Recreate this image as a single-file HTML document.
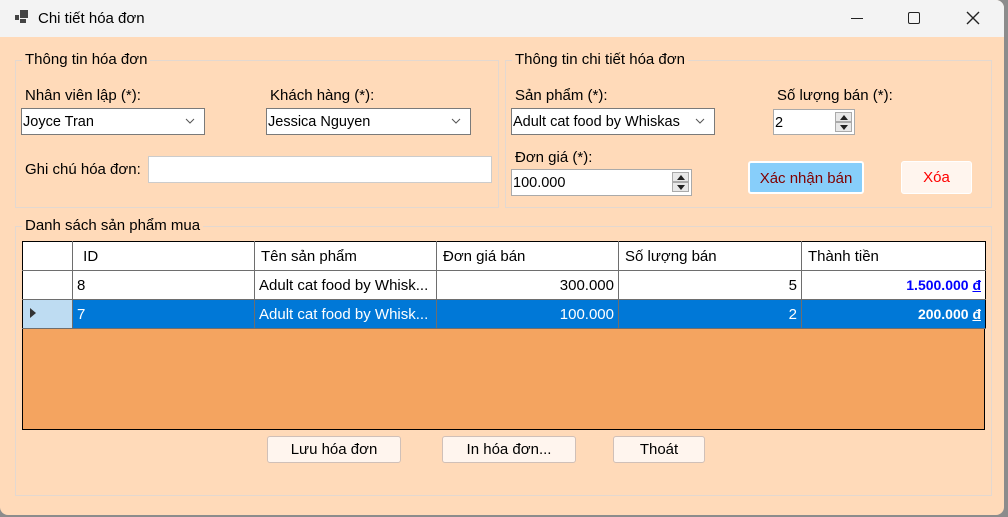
<!DOCTYPE html>
<html><head><meta charset="utf-8"><style>
*{box-sizing:border-box;margin:0;padding:0}
body{width:1008px;height:517px;background:#8c8c8c;overflow:hidden;font-family:"Liberation Sans",sans-serif;font-size:15px;color:#000;position:relative}
.win{position:absolute;left:0;top:0;width:1004px;height:515px;background:#FFDAB9;border-radius:0 8px 8px 8px;overflow:hidden}
.title{position:absolute;left:0;top:0;width:1004px;height:37px;background:#f3f3f3}
.a{position:absolute;white-space:nowrap}
.gb{position:absolute;border:1px solid #e3d8d0}
.gt{position:absolute;background:#FFDAB9;padding:0 3px;font-size:15px}
.box{position:absolute;background:#fff;border:1px solid #7a7a7a;padding:1px 0 0 1px;line-height:24px;font-size:14.5px}
.chev{position:absolute;right:8px;top:6px;width:12px;height:12px}
.spin{position:absolute;right:2px;top:2px;width:17px;height:20px}
.spin div{height:10px;background:#e8e8e8;border:1px solid #aaa;position:relative}
.btn{position:absolute;border:1px solid #d0c0b8;border-radius:3px;background:#FFF5EE;text-align:center;font-size:15px}
table{border-collapse:collapse;position:absolute;left:22px;top:241px;table-layout:fixed}
td{border:1px solid #6e6e6e;height:29px;padding:0 6px;font-size:15px;white-space:nowrap;overflow:hidden}
</style></head><body>
<div class="win">
<div class="title">
<svg class="a" style="left:15px;top:10px" width="14" height="14" viewBox="0 0 14 14"><rect x="0" y="5" width="4" height="5" fill="#444"/><rect x="5" y="0" width="8" height="8" fill="#444"/><rect x="5" y="9" width="6" height="4" fill="#444"/></svg>
<div class="a" style="left:38px;top:10px;font-size:15px">Chi tiết hóa đơn</div>
<div class="a" style="left:851px;top:18px;width:12px;height:1px;background:#222"></div>
<div class="a" style="left:908px;top:12px;width:12px;height:12px;border:1.5px solid #222;border-radius:2px"></div>
<svg class="a" style="left:966px;top:11px" width="14" height="14"><path d="M1 1L13 13M13 1L1 13" stroke="#222" stroke-width="1.4"/></svg>
</div>

<div class="gb" style="left:15px;top:60px;width:484px;height:148px"></div>
<div class="gt" style="left:22px;top:51px">Thông tin hóa đơn</div>
<div class="a" style="left:25px;top:87px">Nhân viên lập (*):</div>
<div class="box" style="left:21px;top:108px;width:184px;height:27px">Joyce Tran<svg class="chev" viewBox="0 0 12 12"><path d="M2 4L6 8L10 4" stroke="#555" fill="none"/></svg></div>
<div class="a" style="left:270px;top:87px">Khách hàng (*):</div>
<div class="box" style="left:266px;top:108px;width:205px;height:27px">Jessica Nguyen<svg class="chev" viewBox="0 0 12 12"><path d="M2 4L6 8L10 4" stroke="#555" fill="none"/></svg></div>
<div class="a" style="left:25px;top:161px">Ghi chú hóa đơn:</div>
<div class="box" style="left:148px;top:156px;width:344px;height:27px;border-color:#ccc"></div>

<div class="gb" style="left:505px;top:60px;width:487px;height:148px"></div>
<div class="gt" style="left:512px;top:51px">Thông tin chi tiết hóa đơn</div>
<div class="a" style="left:515px;top:87px">Sản phẩm (*):</div>
<div class="box" style="left:511px;top:108px;width:204px;height:27px">Adult cat food by Whiskas<svg class="chev" viewBox="0 0 12 12"><path d="M2 4L6 8L10 4" stroke="#555" fill="none"/></svg></div>
<div class="a" style="left:777px;top:87px">Số lượng bán (*):</div>
<div class="box" style="left:773px;top:109px;width:82px;height:26px;border-color:#aaa">2<div class="spin"><div><svg class="a" style="left:4px;top:2px" width="8" height="5"><path d="M0 5L4 0L8 5Z" fill="#222"/></svg></div><div><svg class="a" style="left:4px;top:2px" width="8" height="5"><path d="M0 0L4 5L8 0Z" fill="#222"/></svg></div></div></div>
<div class="a" style="left:515px;top:149px">Đơn giá (*):</div>
<div class="box" style="left:511px;top:169px;width:181px;height:27px;border-color:#aaa">100.000<div class="spin"><div><svg class="a" style="left:4px;top:2px" width="8" height="5"><path d="M0 5L4 0L8 5Z" fill="#222"/></svg></div><div><svg class="a" style="left:4px;top:2px" width="8" height="5"><path d="M0 0L4 5L8 0Z" fill="#222"/></svg></div></div></div>
<div class="btn" style="left:748px;top:161px;width:116px;height:33px;line-height:31px;background:#87CEFA;border:2px solid #fff;color:#800000">Xác nhận bán</div>
<div class="btn" style="left:901px;top:161px;width:71px;height:33px;line-height:31px;border:1px solid #fff;color:#f00">Xóa</div>

<div class="gb" style="left:15px;top:226px;width:977px;height:270px"></div>
<div class="gt" style="left:22px;top:217px">Danh sách sản phẩm mua</div>
<div class="a" style="left:22px;top:241px;width:963px;height:189px;background:#F4A460;border:1px solid #000"></div>
<table>
<colgroup><col style="width:50px"><col style="width:182px"><col style="width:182px"><col style="width:182px"><col style="width:183px"><col style="width:184px"></colgroup>
<tr style="background:#fff;height:28px"><td style="border-top-color:#000;border-left-color:#000"></td><td style="border-top-color:#000">&nbsp;ID</td><td style="border-top-color:#000">Tên sản phẩm</td><td style="border-top-color:#000">Đơn giá bán</td><td style="border-top-color:#000">Số lượng bán</td><td style="border-top-color:#000;border-right-color:#000">Thành tiền</td></tr>
<tr style="background:#fff"><td style="border-left-color:#000"></td><td style="padding-left:4px">8</td><td style="padding-left:4px">Adult cat food by Whisk...</td><td style="text-align:right;padding-right:4px">300.000</td><td style="text-align:right;padding-right:4px">5</td><td style="text-align:right;padding-right:4px;color:#0000ff;font-weight:bold;border-right-color:#000;font-size:14px">1.500.000 <u>đ</u></td></tr>
<tr style="background:#0078D7;color:#fff"><td style="background:#BEDCF2;border-left-color:#000"><svg width="8" height="12"><path d="M1 1L7 6L1 11Z" fill="#333"/></svg></td><td style="padding-left:4px">7</td><td style="padding-left:4px">Adult cat food by Whisk...</td><td style="text-align:right;padding-right:4px">100.000</td><td style="text-align:right;padding-right:4px">2</td><td style="text-align:right;padding-right:4px;font-weight:bold;border-right-color:#000;font-size:14px">200.000 <u>đ</u></td></tr>
</table>
<div class="btn" style="left:267px;top:436px;width:134px;height:27px;line-height:25px">Lưu hóa đơn</div>
<div class="btn" style="left:442px;top:436px;width:134px;height:27px;line-height:25px">In hóa đơn...</div>
<div class="btn" style="left:613px;top:436px;width:92px;height:27px;line-height:25px">Thoát</div>
</div>
</body></html>
